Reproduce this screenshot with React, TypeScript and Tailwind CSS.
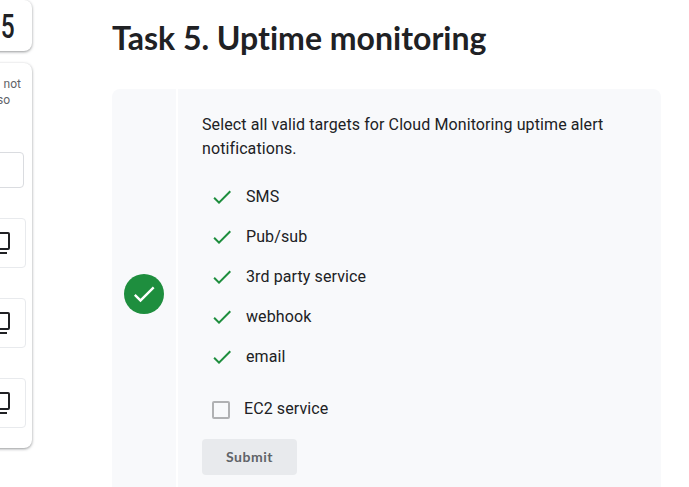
const answers = ["SMS", "Pub/sub", "3rd party service", "webhook", "email"];

function Check({ className }: { className: string }) {
  return (
    <svg viewBox="0 0 24 24" fill="currentColor" className={className}>
      <path d="M9 16.17 4.83 12l-1.42 1.41L9 19 21 7l-1.41-1.41z" />
    </svg>
  );
}

function CopyBox() {
  return (
    <div className="flex h-[50px] w-[200px] items-center justify-end rounded border border-[#e8eaed] pr-[13px]">
      <svg viewBox="0 0 24 24" className="h-6 w-6" fill="none" stroke="#202124" strokeWidth="2">
        <rect x="4" y="2" width="17" height="16" rx="1" />
        <path d="M1 5v17h18" />
      </svg>
    </div>
  );
}

function Sidebar() {
  return (
    <aside className="flex w-8 shrink-0 flex-col items-end gap-3">
      <div className="flex h-[51px] w-60 shrink-0 items-center justify-end rounded-br-lg rounded-tr-lg bg-white pr-[17px] shadow-[0_1px_3px_rgba(60,64,67,0.55)]">
        <span className="origin-right scale-x-[0.72] font-['Roboto'] text-[34px] font-medium leading-none text-[#202124]">
          95
        </span>
      </div>
      <div className="flex h-[385px] w-60 shrink-0 flex-col items-end rounded-lg bg-white pt-[13px] shadow-[0_1px_3px_rgba(60,64,67,0.55)]">
        <p className="w-full text-right font-['Roboto'] text-xs leading-4 text-[#5f6368]">
          <span className="block pr-[11px]">not</span>
          <span className="block pr-[22px]">so</span>
        </p>
        <div className="mr-2 mt-11 h-9 w-[200px] shrink-0 rounded border border-[#dadce0]" />
        <div className="mr-1.5 mt-[30px] flex flex-col gap-[30px]">
          <CopyBox />
          <CopyBox />
          <CopyBox />
        </div>
      </div>
    </aside>
  );
}

export default function App() {
  return (
    <div className="flex h-[487px] w-[689px] overflow-hidden bg-white font-['Roboto',sans-serif] text-[#202124]">
      <Sidebar />
      <main className="ml-20 w-[549px] shrink-0 pt-[18px]">
        <h1 className="whitespace-nowrap font-['Lato'] text-[32px] font-bold leading-10 tracking-[0.01px] [font-variant-ligatures:none]">
          Task 5. Uptime monitoring
        </h1>
        <section className="mt-[31px] flex h-[420px] gap-0.5 overflow-hidden rounded-lg">
          <div className="flex w-16 shrink-0 items-center justify-center bg-[#f8f9fb]">
            <div className="mt-[-10px] flex h-10 w-10 items-center justify-center rounded-full bg-[#1e8e3e]">
              <Check className="h-7 w-7 text-white" />
            </div>
          </div>
          <div className="flex-1 bg-[#f8f9fb] pl-6 pr-8 pt-6">
            <p className="text-base leading-6 tracking-[0.1px]">
              Select all valid targets for Cloud Monitoring uptime alert notifications.
            </p>
            <ul className="mt-4">
              {answers.map((a) => (
                <li key={a} className="flex h-10 items-center pl-2">
                  <Check className="h-6 w-6 text-[#1e8e3e]" />
                  <span className="pl-3 text-base tracking-[0.1px]">{a}</span>
                </li>
              ))}
            </ul>
            <div className="mt-3 flex h-10 items-center pl-2.5">
              <span className="mt-0.5 h-[18px] w-[18px] rounded-[2px] border-2 border-[#b0b1b3]" />
              <span className="pl-3.5 text-base tracking-[0.1px]">EC2 service</span>
            </div>
            <button className="mt-[10px] h-9 w-[95px] rounded bg-[#e8eaed] font-['Lato'] text-sm font-bold tracking-[0.5px] text-[#5f6368]">
              Submit
            </button>
          </div>
        </section>
      </main>
    </div>
  );
}
